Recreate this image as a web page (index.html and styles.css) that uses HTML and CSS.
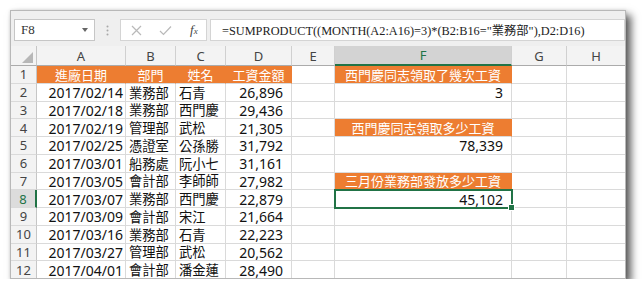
FILE: index.html
```html
<!DOCTYPE html>
<html lang="zh-Hant">
<head>
    <meta charset="UTF-8">
    <title>SUMPRODUCT</title>
    <link rel="stylesheet" href="styles.css">
</head>
<body>
    <div class="window">
        <div class="formula-bar">
            <div class="name-box">F8<span class="caret"></span></div>
            <div class="grip">
                <svg width="3" height="11" viewBox="0 0 3 11"><circle cx="1.5" cy="1.5" r="1" fill="#a8a8a8"/><circle cx="1.5" cy="5.5" r="1" fill="#a8a8a8"/><circle cx="1.5" cy="9.5" r="1" fill="#a8a8a8"/></svg>
            </div>
            <div class="fx-box">
                <svg class="btn" width="11" height="11" viewBox="0 0 11 11"><path d="M1 1L10 10M10 1L1 10" stroke="#b9b9b9" stroke-width="1.2" fill="none"/></svg>
                <svg class="btn" width="13" height="11" viewBox="0 0 13 11"><path d="M1 6L4.5 9.5L12 1.5" stroke="#b9b9b9" stroke-width="1.2" fill="none"/></svg>
                <span class="fx">f<small>x</small></span>
            </div>
            <div class="formula">=SUMPRODUCT((MONTH(A2:A16)=3)*(B2:B16="業務部"),D2:D16)</div>
        </div>

        <div class="sheet">
            <div class="corner"><svg width="12" height="12" viewBox="0 0 12 12"><polygon points="11,0 11,11 0,11" fill="#b7b7b7"/></svg></div>
            <div class="hd">A</div>
            <div class="hd">B</div>
            <div class="hd">C</div>
            <div class="hd">D</div>
            <div class="hd">E</div>
            <div class="hd hd-sel">F</div>
            <div class="hd">G</div>
            <div class="hd">H</div>

            <div class="rh">1</div>
            <div class="c title">進廠日期</div>
            <div class="c title">部門</div>
            <div class="c title">姓名</div>
            <div class="c title">工資金額</div>
            <div class="c"></div>
            <div class="c title">西門慶同志領取了幾次工資</div>
            <div class="c"></div>
            <div class="c"></div>

            <div class="rh">2</div>
            <div class="c date">2017/02/14</div>
            <div class="c txt">業務部</div>
            <div class="c txt">石青</div>
            <div class="c num">26,896</div>
            <div class="c"></div>
            <div class="c num">3</div>
            <div class="c"></div>
            <div class="c"></div>

            <div class="rh">3</div>
            <div class="c date">2017/02/18</div>
            <div class="c txt">業務部</div>
            <div class="c txt">西門慶</div>
            <div class="c num">29,436</div>
            <div class="c"></div>
            <div class="c"></div>
            <div class="c"></div>
            <div class="c"></div>

            <div class="rh">4</div>
            <div class="c date">2017/02/19</div>
            <div class="c txt">管理部</div>
            <div class="c txt">武松</div>
            <div class="c num">21,305</div>
            <div class="c"></div>
            <div class="c title">西門慶同志領取多少工資</div>
            <div class="c"></div>
            <div class="c"></div>

            <div class="rh">5</div>
            <div class="c date">2017/02/25</div>
            <div class="c txt">憑證室</div>
            <div class="c txt">公孫勝</div>
            <div class="c num">31,792</div>
            <div class="c"></div>
            <div class="c num">78,339</div>
            <div class="c"></div>
            <div class="c"></div>

            <div class="rh">6</div>
            <div class="c date">2017/03/01</div>
            <div class="c txt">船務處</div>
            <div class="c txt">阮小七</div>
            <div class="c num">31,161</div>
            <div class="c"></div>
            <div class="c"></div>
            <div class="c"></div>
            <div class="c"></div>

            <div class="rh">7</div>
            <div class="c date">2017/03/05</div>
            <div class="c txt">會計部</div>
            <div class="c txt">李師師</div>
            <div class="c num">27,982</div>
            <div class="c"></div>
            <div class="c title">三月份業務部發放多少工資</div>
            <div class="c"></div>
            <div class="c"></div>

            <div class="rh rh-sel">8</div>
            <div class="c date">2017/03/07</div>
            <div class="c txt">業務部</div>
            <div class="c txt">西門慶</div>
            <div class="c num">22,879</div>
            <div class="c"></div>
            <div class="c num active">45,102</div>
            <div class="c"></div>
            <div class="c"></div>

            <div class="rh">9</div>
            <div class="c date">2017/03/09</div>
            <div class="c txt">會計部</div>
            <div class="c txt">宋江</div>
            <div class="c num">21,664</div>
            <div class="c"></div>
            <div class="c"></div>
            <div class="c"></div>
            <div class="c"></div>

            <div class="rh">10</div>
            <div class="c date">2017/03/16</div>
            <div class="c txt">業務部</div>
            <div class="c txt">石青</div>
            <div class="c num">22,223</div>
            <div class="c"></div>
            <div class="c"></div>
            <div class="c"></div>
            <div class="c"></div>

            <div class="rh">11</div>
            <div class="c date">2017/03/27</div>
            <div class="c txt">管理部</div>
            <div class="c txt">武松</div>
            <div class="c num">20,562</div>
            <div class="c"></div>
            <div class="c"></div>
            <div class="c"></div>
            <div class="c"></div>

            <div class="rh">12</div>
            <div class="c date">2017/04/01</div>
            <div class="c txt">會計部</div>
            <div class="c txt">潘金蓮</div>
            <div class="c num">28,490</div>
            <div class="c"></div>
            <div class="c"></div>
            <div class="c"></div>
            <div class="c"></div>
        </div>
    </div>
</body>
</html>
```

FILE: styles.css
```css
body {
    margin: 0;
    background-color: #fff;
    font-family: "Noto Sans", "Noto Sans CJK TC", sans-serif;
    color: #111;
}
.window {
    margin: 10px 0 0 10px;
    width: 616px;
    height: 269px;
    box-sizing: border-box;
    border: 1px solid #b8b8b8;
    overflow: hidden;
    background-color: #fff;
    box-shadow: 5px 5px 8px rgba(0, 0, 0, 0.65), 0 0 3px rgba(0, 0, 0, 0.12);
}

/* formula bar */
.formula-bar {
    display: flex;
    align-items: flex-start;
    height: 35px;
    padding: 8px 0 0 3px;
    box-sizing: border-box;
    background-color: #efefef;
}
.name-box {
    display: flex;
    align-items: center;
    width: 81px;
    height: 22px;
    box-sizing: border-box;
    padding: 0 6px;
    background-color: #fff;
    border: 1px solid #c6c6c6;
    font-family: "Liberation Serif", serif;
    font-size: 13px;
    color: #333;
}
.caret {
    margin-left: auto;
    border-top: 4px solid #666;
    border-left: 3px solid transparent;
    border-right: 3px solid transparent;
}
.grip {
    display: flex;
    justify-content: center;
    align-items: center;
    width: 25px;
    height: 22px;
}
.fx-box {
    display: flex;
    align-items: center;
    width: 87px;
    height: 22px;
    box-sizing: border-box;
    padding-left: 10px;
    background-color: #fff;
    border: 1px solid #d4d4d4;
}
.btn {
    margin-right: 17px;
}
.fx {
    margin-left: 1px;
    font-family: "Liberation Serif", serif;
    font-style: italic;
    font-size: 13px;
    color: #444;
}
.fx small {
    font-size: 9px;
}
.formula {
    flex: 1;
    display: flex;
    align-items: center;
    height: 22px;
    margin-left: 3px;
    padding-left: 11px;
    box-sizing: border-box;
    background-color: #fff;
    border: 1px solid #d4d4d4;
    font-family: "Liberation Serif", "Noto Sans CJK TC", serif;
    font-size: 12.3px;
    color: #222;
    white-space: nowrap;
}

/* sheet */
.sheet {
    display: grid;
    grid-template-columns: 26px 89px 50px 50px 66px 43px 177px 55px 59px;
    grid-template-rows: 20px repeat(12, 17.75px);
}
.corner,
.hd,
.rh,
.c {
    box-sizing: border-box;
    border-right: 1px solid #dadada;
    border-bottom: 1px solid #dadada;
    white-space: nowrap;
    overflow: hidden;
}
.corner {
    display: flex;
    justify-content: flex-end;
    align-items: flex-end;
    padding: 0 2px 1px 0;
    background-color: #f3f3f3;
    border-color: #c6c6c6 #c6c6c6 #ababab;
}
.hd {
    display: flex;
    justify-content: center;
    align-items: center;
    background-color: #f3f3f3;
    border-right-color: #d0d0d0;
    border-bottom-color: #ababab;
    font-size: 13px;
    color: #444;
}
.hd-sel {
    background-color: #d3d3d3;
    border-bottom: 2px solid #217346;
    color: #217346;
}
.rh {
    display: flex;
    justify-content: center;
    align-items: center;
    background-color: #f3f3f3;
    border-right-color: #c6c6c6;
    border-bottom-color: #dadada;
    font-size: 13px;
    color: #444;
}
.rh-sel {
    background-color: #dcdcdc;
    border-right: 2px solid #217346;
    color: #217346;
}
.c {
    display: flex;
    align-items: center;
    padding: 0 3px;
}
.date,
.num {
    justify-content: flex-end;
    font-size: 14px;
    padding-top: 1px;
}
.date {
    padding-right: 2px;
}
.num {
    padding-right: 8px;
}
.txt {
    font-family: "Noto Sans CJK TC", sans-serif;
    font-size: 13.3px;
}
.title {
    justify-content: center;
    background-color: #ed7d31;
    border-right-color: #ed7d31;
    font-family: "Noto Sans CJK TC", sans-serif;
    font-size: 13px;
    color: #fff;
}
.active {
    position: relative;
    z-index: 2;
    overflow: visible;
    outline: 2px solid #217346;
    outline-offset: -1px;
}
.active::after {
    content: "";
    position: absolute;
    right: -4px;
    bottom: -4px;
    width: 5px;
    height: 5px;
    background-color: #217346;
    border: 1px solid #fff;
}
```
